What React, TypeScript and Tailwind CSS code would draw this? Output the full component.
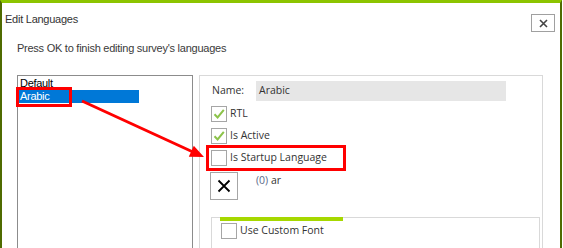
import React from 'react';

const CheckBox = ({ checked }: { checked?: boolean }) => (
  <div className="w-4 h-4 border border-[#a6a6a6] bg-white flex items-center justify-center shrink-0">
    {checked && (
      <svg width="12" height="12" viewBox="0 0 12 12">
        <path d="M1.5 6.2 L4.6 9.5 L10.8 1.8" fill="none" stroke="#8cc34a" strokeWidth="2" />
      </svg>
    )}
  </div>
);

const CheckRow = ({ label, checked }: { label: string; checked?: boolean }) => (
  <div className="flex items-center gap-[3px] h-4">
    <CheckBox checked={checked} />
    <span>{label}</span>
  </div>
);

export default function App() {
  return (
    <div className="relative w-[563px] h-[248px] overflow-hidden bg-white">
      <div className="w-[562px] h-full border-t-[3px] border-t-[#8cc400] border-l-2 border-r-2 border-l-[#4f6b00] border-r-[#4f6b00] font-['Liberation_Sans',Arial,sans-serif] text-[11px] text-[#333]">
        {/* title bar */}
        <div className="flex justify-between items-start pl-[3px] pr-[5px]">
          <div className="pt-[8px] tracking-[-0.25px]">Edit Languages</div>
          <button className="mt-[11px] w-6 h-[18px] border border-[#a0a0a0] flex items-center justify-center bg-white">
            <svg width="9" height="9" viewBox="0 0 9 9">
              <path d="M1 1 L8 8 M8 1 L1 8" stroke="#444" strokeWidth="1.6" />
            </svg>
          </button>
        </div>
        <div className="pl-[15px] mt-[8px] tracking-[-0.25px] text-[#3a3a3a]">Press OK to finish editing survey's languages</div>

        <div className="flex gap-[6px] pl-[15px] mt-[18px]">
          {/* language list */}
          <div className="w-[176px] h-[200px] border border-[#8c8c8c] pt-[1px] pl-[1px] text-black tracking-[-0.3px] leading-[13px]">
            <div className="pl-[1px]">Default</div>
            <div className="w-[120px] h-[13px] bg-[#0078d7] text-white pl-[1px]">Arabic</div>
          </div>

          {/* details */}
          <div className="w-[344px] h-[200px] border border-[#d9d9d9] pl-[11px] pt-[5px] font-['Open_Sans',sans-serif] text-[10.5px] text-[#333]">
            <div className="flex items-center h-5">
              <span className="w-[45px] pl-[1px]">Name:</span>
              <div className="w-[250px] h-5 bg-[#e6e6e6] flex items-center pl-[3px]">Arabic</div>
            </div>
            <div className="flex flex-col gap-[6px] mt-[5px]">
              <CheckRow label="RTL" checked />
              <CheckRow label="Is Active" checked />
              <CheckRow label="Is Startup Language" />
            </div>
            <div className="flex items-start mt-[6px] -ml-[1px]">
              <div className="w-[28px] h-[28px] border border-[#a6a6a6] flex items-center justify-center">
                <svg width="16" height="16" viewBox="0 0 16 16">
                  <path d="M2.5 2.5 L13.5 13.5 M13.5 2.5 L2.5 13.5" stroke="#000" strokeWidth="1.8" />
                </svg>
              </div>
              <span className="ml-[18px] mt-[1px] text-[#333]"><span className="text-[#5a6a8a]">(0)</span> ar</span>
            </div>
            <div className="relative mt-[17px] w-[329px] h-[40px] border-t border-l border-r border-[#d9d9d9] pl-[9px] pt-[5px]">
              <div className="absolute -top-px left-[8px] w-[123px] h-[4px] bg-[#a6d800]" />
              <CheckRow label="Use Custom Font" />
            </div>
          </div>
        </div>
      </div>

      {/* annotation overlay */}
      <div className="absolute left-[16px] top-[87px] w-[56px] h-[20px] border-[3px] border-[#ff0000]" />
      <div className="absolute left-[206px] top-[145px] w-[140px] h-[26px] border-[3px] border-[#ff0000]" />
      <svg className="absolute left-0 top-0 pointer-events-none" width="563" height="248">
        <line x1="82" y1="101" x2="193" y2="152" stroke="#ff0000" strokeWidth="3" />
        <polygon points="204,157 193.8,145.7 188.8,156.7" fill="#ff0000" />
      </svg>
    </div>
  );
}
